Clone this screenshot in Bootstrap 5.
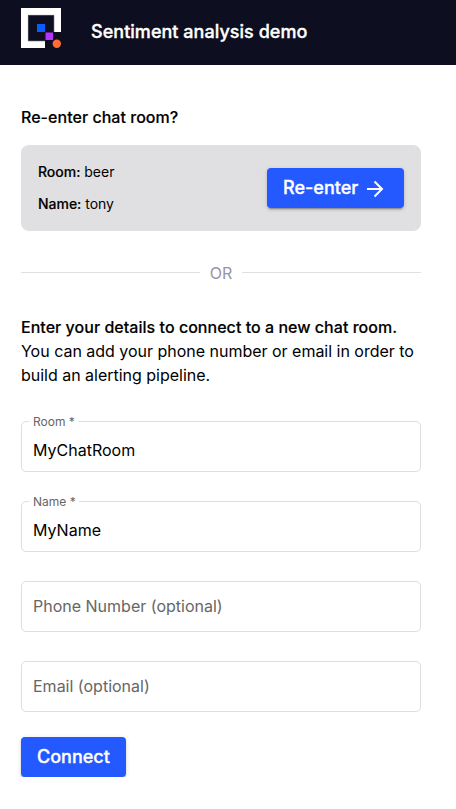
<!DOCTYPE html>
<html lang="en">
<head>
<meta charset="utf-8">
<meta name="viewport" content="width=device-width, initial-scale=1">
<title>Sentiment analysis demo</title>
<link href="https://cdn.jsdelivr.net/npm/bootstrap@5.3.0/dist/css/bootstrap.min.css" rel="stylesheet">
<style>
body{font-family:Inter,sans-serif;font-size:16px;line-height:24px;color:#000;background:#fff}
.topbar{height:65px;background:#0d0e1f;padding:8px 21px 17px}
.topbar svg{margin-right:30px}
.topbar h1{font-size:18px;line-height:24px;padding-top:8px;color:#fff}
.page-body{width:421px;padding:40px 0 0 21px}
.medium{font-weight:500;letter-spacing:.035px}
.topbar h1,.btn-brand{-webkit-text-stroke:.35px #fff}
.page-body .medium{-webkit-text-stroke:.15px #000}
.session-box{height:86px;margin-top:16px;padding:0 17px;border-radius:8px;background:#e0e0e2;font-size:14px}
.session-box p,.session-box .medium{line-height:20px;letter-spacing:-.02px}
.btn-brand{--bs-btn-color:#fff;--bs-btn-bg:#2459ff;--bs-btn-hover-color:#fff;--bs-btn-hover-bg:#194ae0;--bs-btn-border-width:0;--bs-btn-border-radius:4px;--bs-btn-padding-x:16px;--bs-btn-padding-y:0;--bs-btn-font-size:18px;--bs-btn-font-weight:500;height:40px;padding-bottom:2px;box-shadow:0 3px 1px -2px rgba(0,0,0,.2),0 2px 2px rgba(0,0,0,.14),0 1px 5px rgba(0,0,0,.12)}
.reenter{width:137px}
.arrow{margin:3px 0 0 8px}
.divider{margin-top:30px;color:#9595a5;gap:10px}
.divider i{height:1px;background:#e0e0e0;margin-bottom:1px}
.intro{margin-top:30px}
.intro .plain{letter-spacing:-.015px}
.fields{margin-top:34px;gap:29px}
.outlined{height:51px}
.outlined .form-control{height:51px;padding:6px 11px 0;border:1px solid #dedede;border-radius:5px;color:#000;font-size:16px;line-height:24px}
.outlined .form-control.bare{padding:0 11px 2px}
.outlined .form-control::placeholder{color:#666;opacity:1}
.outlined label{left:8px;top:-7px;padding:0 3px 0 4px;background:#fff;color:#666;font-size:12px;line-height:16px}
.connect{margin-top:25px}
</style>
<script src="https://cdn.jsdelivr.net/npm/bootstrap@5.3.0/dist/js/bootstrap.bundle.min.js"></script>
</head>
<body>
<header class="topbar d-flex align-items-center">
  <svg width="40" height="40" viewBox="0 0 40 40" aria-hidden="true">
    <path fill="#fff" d="M0 0h40v24h-7V7H7v26h17v7H0z"/>
    <path fill="none" stroke="#777783" stroke-width=".6" d="M33 24V7.3H7.3V33H24"/>
    <path fill="#0b5cff" d="M16 16h8v8h-8z"/>
    <path fill="#b532ff" d="M24.5 24.5h7.5v7.5h-7.5z"/>
    <circle cx="35.8" cy="35.8" r="4.2" fill="#ff6c36"/>
  </svg>
  <h1 class="medium mb-0">Sentiment analysis demo</h1>
</header>
<main class="page-body">
  <h2 class="fs-6 lh-base medium mb-0">Re-enter chat room?</h2>
  <section class="session-box d-flex align-items-center justify-content-between">
    <div class="d-flex flex-column" style="gap:12px">
      <p class="mb-0"><span class="medium">Room:</span> beer</p>
      <p class="mb-0"><span class="medium">Name:</span> tony</p>
    </div>
    <button class="btn btn-brand reenter d-flex align-items-center" type="button">Re-enter
      <svg class="arrow" width="18" height="18" viewBox="0 0 18 18" fill="none" stroke="#fff" stroke-width="2" aria-hidden="true"><path d="M1 9h15M8.5 1.5 16 9l-7.5 7.5"/></svg>
    </button>
  </section>
  <div class="divider d-flex align-items-center"><i class="flex-fill"></i><span>OR</span><i class="flex-fill"></i></div>
  <p class="intro mb-0"><span class="medium">Enter your details to connect to a new chat room.</span><br><span class="plain">You can add your phone number or email in order to build an alerting pipeline.</span></p>
  <form>
    <div class="fields d-flex flex-column">
      <div class="outlined position-relative"><input class="form-control" id="room" value="MyChatRoom"><label class="position-absolute" for="room">Room *</label></div>
      <div class="outlined position-relative"><input class="form-control" id="person" value="MyName"><label class="position-absolute" for="person">Name *</label></div>
      <div class="outlined"><input class="form-control bare" placeholder="Phone Number (optional)" aria-label="Phone Number"></div>
      <div class="outlined"><input class="form-control bare" placeholder="Email (optional)" aria-label="Email"></div>
    </div>
    <button class="btn btn-brand connect" type="button">Connect</button>
  </form>
</main>
</body>
</html>
